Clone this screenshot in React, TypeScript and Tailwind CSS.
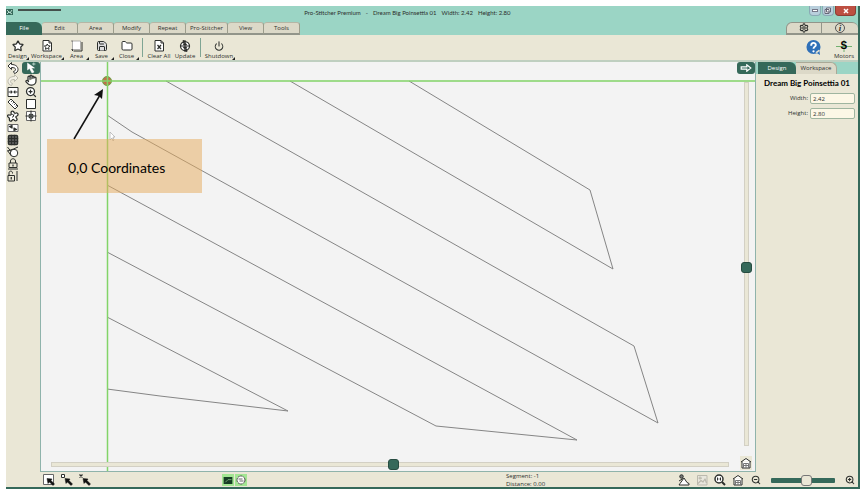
import type { ReactNode } from "react";
import {
  Folder,
  Grid3x3,
  Hand,
  Power,
  Save,
  Settings,
  Star,
  ZoomIn,
  ZoomOut,
} from "lucide-react";

const menuTabs = [
  { name: "File", width: "w-9" },
  { name: "Edit", width: "w-9" },
  { name: "Area", width: "w-9" },
  { name: "Modify", width: "w-9" },
  { name: "Repeat", width: "w-9" },
  { name: "Pro-Stitcher", width: "w-[42px]" },
  { name: "View", width: "w-9" },
  { name: "Tools", width: "w-9" },
];

const Svg = ({ children, size = "size-3" }: { children: ReactNode; size?: string }) => (
  <svg
    viewBox="0 0 24 24"
    className={`${size} shrink-0`}
    fill="none"
    stroke="currentColor"
    strokeWidth="2.5"
    strokeLinejoin="round"
    aria-hidden="true"
  >
    {children}
  </svg>
);

const WorkspaceIcon = () => (
  <Svg>
    <path d="M4 1h12l5 5v16H4z" fill="#fff" strokeWidth="2" />
    <path d="M16 1v5h5" strokeWidth="2" />
    <path d="m12.500 8 1.800 3.500 4 .5-3 2.700.8 4-3.600-2-3.600 2 .8-4-3-2.700 4-.5z" strokeWidth="2" />
  </Svg>
);

const AreaIcon = () => (
  <Svg>
    <path d="M3 2h16v17H3z" fill="#fff" stroke="#999" strokeWidth="1.5" />
    <path d="M5 22h17V4" strokeWidth="2" />
    <path d="M1 2h2M1 19h2v3" strokeWidth="2" />
  </Svg>
);

const ClearIcon = () => (
  <Svg>
    <path d="M4 1h12l5 5v16H4z" fill="#fff" strokeWidth="2" />
    <path d="M16 1v5h5" strokeWidth="2" />
    <path d="m9 10 7 8M16 10l-7 8" />
  </Svg>
);

const UpdateIcon = () => (
  <Svg>
    <circle cx="12" cy="12" r="9" fill="#fff" strokeWidth="2.5" />
    <path d="M12 0v24M4 12h16" strokeWidth="2" />
    <path d="m12 5 4 5H8zM12 19l4-5H8z" fill="currentColor" strokeWidth="1" />
    <path d="m8 0 5 3-5 4zM16 24l-5-3 5-4z" fill="currentColor" strokeWidth="1" />
  </Svg>
);

const UndoIcon = () => (
  <Svg>
    <path
      d="M2 8 9 1v4c8 0 13 4 13 10 0 4-3 7-7 8l-2-4c3-1 4-2 4-4 0-3-3-4-8-4v4z"
      fill="#fff"
      strokeWidth="2"
    />
  </Svg>
);

const RedoIcon = () => (
  <Svg>
    <path
      d="m22 8-7-7v4C7 5 2 9 2 15c0 4 3 7 7 8l2-4c-3-1-4-2-4-4 0-3 3-4 8-4v4z"
      fill="#f3f1e8"
      strokeWidth="2"
    />
  </Svg>
);

const FitIcon = () => (
  <Svg>
    <path d="M2 3h20v18H2z" fill="#fff" strokeWidth="2" />
    <path d="M3 12h7M14 12h7" strokeWidth="2" />
    <path d="m8 9 3 3-3 3zM16 9l-3 3 3 3z" fill="currentColor" strokeWidth="1" />
  </Svg>
);

const RulerIcon = () => (
  <Svg>
    <path d="m2 8 6-6 14 14-6 6z" fill="#fff" strokeWidth="2" />
    <path d="m11 5-3 3M14 8l-3 3M17 11l-3 3M20 14l-3 3" strokeWidth="1.5" />
  </Svg>
);

const PuzzleIcon = () => (
  <Svg>
    <path
      d="M8 5c0-4 6-4 6 0 1 2 2 2 4 1 5-1 5 5 2 6-3 1-3 2-1 4 3 4-1 7-4 5-2-3-4-3-5 0-3 3-6 0-5-3 0-2-1-3-3-4-2-3 0-5 3-4 3 1 4-1 3-5z"
      fill="#fff"
    />
    <path d="M9 9c3-1 5 1 4 4M14 9l-3 6" strokeWidth="2" />
  </Svg>
);

const SwapIcon = () => (
  <Svg>
    <path d="M2 5h20v14H2z" fill="#fff" stroke="#666" strokeWidth="2" />
    <path d="m5 9 5-2v5zM19 15l-5 2v-5z" fill="currentColor" />
  </Svg>
);

const LoopIcon = () => (
  <Svg>
    <circle cx="14" cy="14" r="7.500" fill="#fff" strokeWidth="2" />
    <path d="m1 2 7 9M1 9l7 10M1 10l12-4 9-4" strokeWidth="2" />
  </Svg>
);

const LockIcon = ({ open = false }: { open?: boolean }) => (
  <Svg>
    {open ? (
      <>
        <path d="M2 11h13v11H2zM4 11V6c0-5 7-5 7 0v1M20 2v20" strokeWidth="2" />
        <path d="M8.500 14v5" />
      </>
    ) : (
      <>
        <path d="M4 10h16v9H4zM7 10V6c0-6 10-6 10 0v4M2 22h20" strokeWidth="2" />
        <path d="M12 13v4" />
      </>
    )}
  </Svg>
);

const SquareIcon = () => (
  <Svg>
    <path d="M3 3h18v18H3z" fill="#fff" strokeWidth="2" />
  </Svg>
);

const TargetIcon = () => (
  <Svg>
    <path d="M3 3h18v18H3z" fill="#fff" stroke="#666" strokeWidth="2" />
    <path d="M12 1v6M12 17v6M1 12h6M17 12h6" strokeWidth="2" />
    <circle cx="12" cy="12" r="4" />
    <circle cx="12" cy="12" r="1" />
  </Svg>
);

const PointerIcon = () => (
  <Svg>
    <path d="M5 2v14l4-3 5 9 4-2-5-8h6z" fill="#fff" stroke="#fff" strokeWidth="1" />
    <path d="M14 4h7M17.500 1v6" stroke="#cfe8df" strokeWidth="1.500" />
  </Svg>
);

const HomeIcon = () => (
  <Svg>
    <path d="M2 10 12 3l10 7M4 9v13h16V9" fill="#fff" strokeWidth="2" />
    <path d="M7 22v-9h10v9M12 13v9M7 17h10" stroke="#777" strokeWidth="2" />
  </Svg>
);

const MagnifierIcon = () => (
  <Svg>
    <circle cx="10" cy="10" r="8" fill="#fff" strokeWidth="3" />
    <path d="m16 16 6 6" strokeWidth="4" />
    <path d="M7 7v6M10 8v1M10 11v1M13 7v6" strokeWidth="2" />
  </Svg>
);

const SceneIcon = () => (
  <Svg>
    <circle cx="7" cy="5" r="3.500" fill="#777" strokeWidth="2" />
    <path d="m2 14 8-5" strokeWidth="2" />
    <path d="m4 19 8-11 6 9 4 2v3H2z" fill="#fff" strokeWidth="2" />
  </Svg>
);

const PictureIcon = () => (
  <Svg>
    <path d="M3 3h19v19H3z" fill="#e8e6dd" strokeWidth="2" />
    <path d="m4 19 6-6 4 3 4-6 3 8M5 8h7M8 5v6" />
  </Svg>
);

const SelectIcon = ({ kind }: { kind: "box" | "point" | "cross" }) => (
  <Svg>
    {kind === "box" && <path d="M1 1h20v20H1z" fill="#fff" stroke="#666" strokeWidth="2" />}
    {kind === "point" && <path d="M1 1h6v6H1z" fill="#fff" strokeWidth="2" />}
    {kind === "cross" && <path d="m1 1 6 6M7 1 1 7" />}
    <path d="m8 9 10 1-2 3 7 7-3 3-7-7-3 3z" fill="#111" stroke="#111" strokeWidth="1" />
  </Svg>
);

const leftTools = [
  { name: "Undo", icon: <UndoIcon /> },
  { name: "Redo", icon: <RedoIcon />, disabled: true },
  { name: "Fit width", icon: <FitIcon /> },
  { name: "Measure", icon: <RulerIcon /> },
  { name: "Puzzle", icon: <PuzzleIcon /> },
  { name: "Swap", icon: <SwapIcon /> },
  { name: "Grid", icon: <Grid3x3 className="size-3" strokeWidth={3} fill="#777" /> },
  { name: "Loop", icon: <LoopIcon /> },
  { name: "Lock", icon: <LockIcon /> },
  { name: "Unlock height", icon: <LockIcon open /> },
];

const rightTools = [
  { name: "Pan", icon: <Hand className="size-3" strokeWidth={2.5} fill="#fff" /> },
  { name: "Zoom", icon: <ZoomIn className="size-3" strokeWidth={2.5} fill="#fff" /> },
  { name: "Box", icon: <SquareIcon /> },
  { name: "Center", icon: <TargetIcon /> },
];

const ToolButton = ({
  label,
  width,
  menu = false,
  children,
}: {
  label: string;
  width: string;
  menu?: boolean;
  children: ReactNode;
}) => (
  <button className={`relative flex h-full flex-col items-center pt-[5px] ${width}`}>
    {children}
    <span className="whitespace-nowrap leading-[8px]">{label}</span>
    {menu && (
      <span className="absolute bottom-0 right-0 size-[3px] bg-[#222] [clip-path:polygon(100%_0,100%_100%,0_100%)]" />
    )}
  </button>
);

const TitleBar = () => (
  <div className="flex h-4 items-start">
    <div className="flex w-[35%] items-center gap-1 pt-[2px]">
      <svg viewBox="0 0 8 8" className="size-2" aria-hidden="true">
        <path d="M0 1h7v6H0z" fill="#35695a" />
        <path d="m1 2 3 3 2-3M1 6l2-2 3 2" stroke="#b8ddd0" fill="none" />
      </svg>
      <div className="mb-1 h-[2px] w-[43px] bg-[#44504c]" />
    </div>
    <h1 className="flex gap-[5px] whitespace-pre pt-[3px] font-['Lato',sans-serif] leading-[8px]">
      <span>Pro-Stitcher Premium</span>
      <span>-</span>
      <span>Dream Big Poinsettia 01</span>
      <span>Width: 2.42</span>
      <span>Height: 2.80</span>
    </h1>
    <div className="ml-auto flex h-[10px] gap-px pr-[2px]">
      <button aria-label="Minimize" className="flex w-[12px] items-center justify-center rounded-b-sm border border-t-0 border-[#8aa9b5] bg-[#b9cfdc]">
        <span className="h-[3px] w-[6px] border border-[#778] bg-white" />
      </button>
      <button aria-label="Restore" className="flex w-[12px] items-center justify-center rounded-b-sm border border-t-0 border-[#8aa9b5] bg-[#b9cfdc]">
        <svg viewBox="0 0 8 8" className="size-2" fill="#fff" stroke="#667" aria-hidden="true">
          <path d="M2.500 1h4v4h-4zM1 2.500h4v4H1z" />
        </svg>
      </button>
      <button aria-label="Close window" className="flex w-[21px] items-center justify-center rounded-b-sm border border-t-0 border-[#8c3e35] bg-[#bd4f42]">
        <svg viewBox="0 0 6 6" className="size-[6px]" stroke="#fff" strokeWidth="1.5" aria-hidden="true">
          <path d="m1 1 4 4M5 1 1 5" />
        </svg>
      </button>
    </div>
  </div>
);

const MenuTabs = () => (
  <nav className="flex h-[13px] items-stretch">
    {menuTabs.map((tab, i) => (
      <button
        key={tab.name}
        className={`${tab.width} whitespace-nowrap leading-[11px] ${
          i === 0
            ? "rounded-tr-md bg-[#35695a] text-white"
            : "rounded-t-[3px] border-b-2 border-r border-t border-b-[#92958a] border-r-[#9c9d8c] border-t-[#b5b6a5] bg-[#dcd9c8] last:rounded-tr-md"
        }`}
      >
        {tab.name}
      </button>
    ))}
    <div className="ml-auto flex">
      <button aria-label="Settings" className="flex w-9 items-center justify-center rounded-tl-md border-x border-b-2 border-t border-[#92958a] bg-[#dcd9c8]">
        <Settings className="size-[10px]" strokeWidth={2.5} />
      </button>
      <button aria-label="Information" className="flex w-9 items-center justify-center rounded-tr-md border-b-2 border-t border-[#92958a] bg-[#dcd9c8]">
        <span className="flex size-[10px] items-center justify-center rounded-full border border-[#555] font-['Liberation_Serif',serif] text-[9px] font-bold italic leading-none">
          i
        </span>
      </button>
    </div>
  </nav>
);

const Toolbar = () => (
  <div className="flex h-[27px] items-stretch border-b-2 border-[#bfcfc0] bg-[#eae7d6]">
    <ToolButton label="Design" width="w-[23px]" menu>
      <Star className="size-3" strokeWidth={2.5} fill="#fff" />
    </ToolButton>
    <ToolButton label="Workspace" width="w-[35px]" menu>
      <WorkspaceIcon />
    </ToolButton>
    <ToolButton label="Area" width="w-[25px]" menu>
      <AreaIcon />
    </ToolButton>
    <ToolButton label="Save" width="w-[25px]" menu>
      <Save className="size-3" strokeWidth={2} fill="#ddd" />
    </ToolButton>
    <ToolButton label="Close" width="w-[25px]" menu>
      <Folder className="size-3" strokeWidth={2} fill="#fff" />
    </ToolButton>
    <div className="mx-[3px] my-[3px] w-px bg-[#7fa594]" />
    <ToolButton label="Clear All" width="w-[26px]">
      <ClearIcon />
    </ToolButton>
    <ToolButton label="Update" width="w-[26px]">
      <UpdateIcon />
    </ToolButton>
    <div className="mx-[2px] my-[3px] w-px bg-[#7fa594]" />
    <ToolButton label="Shutdown" width="w-8" menu>
      <span className="flex h-3 items-center">
        <Power className="size-[10px]" strokeWidth={2.5} />
      </span>
    </ToolButton>
    <div className="ml-auto flex gap-[13px] pr-[4px]">
      <button aria-label="Help" className="flex items-center">
        <svg viewBox="0 0 16 16" className="size-[15px]" aria-hidden="true">
          <path d="M8 0a7.500 7.500 0 1 1 0 15A7.500 7.500 0 0 1 8 0M10 13l5 3-1-6z" fill="#2f70b8" />
          <path d="M5.500 6c0-4 5-3.500 5-.700C10.500 7 8 7.200 8 9.300" fill="none" stroke="#fff" strokeWidth="2" />
          <circle cx="8" cy="12" r="1.200" fill="#fff" />
        </svg>
      </button>
      <button className="flex flex-col items-center pt-[5px]">
        <span className="relative flex h-3 w-4 items-center justify-center">
          <svg viewBox="0 0 16 12" className="absolute inset-0 size-full" stroke="#72b070" aria-hidden="true">
            <path d="M0 6.500h16M8 0v12" />
          </svg>
          <span className="relative font-['Liberation_Sans',sans-serif] text-[10px] font-bold leading-none text-black">
            S
          </span>
        </span>
        <span className="leading-[8px]">Motors</span>
      </button>
    </div>
  </div>
);

const ToolPalette = () => (
  <aside className="flex w-[34px] shrink-0 gap-[2px] bg-[#eae7d6]">
    <div className="flex w-[14px] flex-col">
      {leftTools.map((tool) => (
        <button
          key={tool.name}
          aria-label={tool.name}
          disabled={tool.disabled}
          className="flex h-3 items-center justify-center disabled:text-[#bbb9ad]"
        >
          {tool.icon}
        </button>
      ))}
    </div>
    <div className="flex flex-1 flex-col">
      <button aria-label="Select" className="flex h-3 items-center justify-center rounded-[3px] bg-[#35695a]">
        <PointerIcon />
      </button>
      {rightTools.map((tool) => (
        <button key={tool.name} aria-label={tool.name} className="flex h-3 items-center justify-center">
          {tool.icon}
        </button>
      ))}
    </div>
  </aside>
);

const Drawing = () => (
  <svg className="absolute inset-0 size-full" fill="none" aria-label="Dream Big Poinsettia 01">
    <g stroke="#858585" strokeWidth="1">
      <path d="M368 19 549 128 572 207 249 19" />
      <path d="M125 19 593 284 617 361 91 70 66 53" />
      <path d="M66 123 536 378 395 364 66 190" />
      <path d="M66 255 247 349 119 334 66 327" />
    </g>
    <circle cx="66" cy="19" r="4.500" fill="#b77b4d" stroke="#6aa646" />
    <path d="m63 16 6 6M69 16l-6 6" stroke="#d4574a" strokeDasharray="2 1" />
    <path d="M66.500 0v1200M0 19h2400" stroke="#82d468" strokeWidth="1.500" />
    <path d="m69 70 0 8 2-2 1 3 1-1-1-3h2z" fill="#fff" stroke="#aaa" strokeWidth=".700" />
    <path d="M33 77 59 33" stroke="#111" strokeWidth="1.500" />
    <path d="m62 27-1 10-3-3-5-1z" fill="#111" />
  </svg>
);

const Canvas = () => (
  <main className="relative flex min-w-0 flex-1 border-x border-b border-[#8fb3ab] bg-[#f3f3f3]">
    <Drawing />
    <div className="absolute left-[6px] top-[77px] flex h-[54px] w-[155px] items-center bg-[#e6aa5a]/50 pl-[21px] pt-[3px] font-['Lato',sans-serif] text-sm text-black">
      0,0 Coordinates
    </div>
    <div className="relative flex flex-1 flex-col justify-end pb-px pl-[10px] pr-[8px]">
      <input
        type="range"
        aria-label="Horizontal scroll"
        min={0}
        max={100}
        defaultValue={50.5}
        step={0.5}
        className="h-[11px] w-full appearance-none bg-transparent [&::-webkit-slider-runnable-track]:h-[5px] [&::-webkit-slider-runnable-track]:border [&::-webkit-slider-runnable-track]:border-[#d3d0c4] [&::-webkit-slider-runnable-track]:bg-[#eae7d6] [&::-webkit-slider-thumb]:-mt-1 [&::-webkit-slider-thumb]:size-[11px] [&::-webkit-slider-thumb]:appearance-none [&::-webkit-slider-thumb]:rounded-[3px] [&::-webkit-slider-thumb]:border [&::-webkit-slider-thumb]:border-[#274c41] [&::-webkit-slider-thumb]:bg-[#35695a]"
      />
    </div>
    <div className="relative flex w-[18px] shrink-0 flex-col items-center">
      <button aria-label="Collapse panel" className="flex h-3 w-full items-center justify-center rounded-[3px] bg-[#35695a]">
        <svg viewBox="0 0 14 10" className="h-2 w-3" fill="none" stroke="#fff" strokeWidth="1.500" aria-hidden="true">
          <path d="M1 3.500h7V1l5 4-5 4V6.500H1z" />
        </svg>
      </button>
      <input
        type="range"
        aria-label="Vertical scroll"
        min={0}
        max={100}
        defaultValue={51}
        className="mb-[10px] mt-2 min-h-0 w-[11px] flex-1 appearance-none bg-transparent [writing-mode:vertical-lr] [&::-webkit-slider-runnable-track]:w-[5px] [&::-webkit-slider-runnable-track]:border [&::-webkit-slider-runnable-track]:border-[#d3d0c4] [&::-webkit-slider-runnable-track]:bg-[#eae7d6] [&::-webkit-slider-thumb]:-ml-1 [&::-webkit-slider-thumb]:size-[11px] [&::-webkit-slider-thumb]:appearance-none [&::-webkit-slider-thumb]:rounded-[3px] [&::-webkit-slider-thumb]:border [&::-webkit-slider-thumb]:border-[#274c41] [&::-webkit-slider-thumb]:bg-[#35695a]"
      />
      <button aria-label="Home view" className="mb-px flex h-[14px] w-3 items-center justify-center bg-[#eae7d6]">
        <HomeIcon />
      </button>
    </div>
  </main>
);

const PropertyPanel = () => (
  <aside className="flex w-[102px] shrink-0 flex-col bg-[#eae7d6]">
    <div className="flex h-3 bg-[#9bd5c5] pl-[2px]">
      <button className="w-[38px] rounded-tr-md bg-[#35695a] leading-3 text-white">Design</button>
      <button className="w-[41px] rounded-tr-md border-r border-t border-[#aaa997] bg-[#dcd9c8] leading-[11px]">
        Workspace
      </button>
    </div>
    <h2 className="whitespace-nowrap pt-1 text-center font-['Lato',sans-serif] text-[8px] font-bold leading-[10px] text-black">
      Dream Big Poinsettia 01
    </h2>
    <div className="flex flex-col items-end gap-1 pr-[3px] pt-[5px]">
      <label className="flex items-center gap-[2px]">
        Width:
        <input defaultValue="2.42" className="h-[11px] w-[45px] rounded-[2px] border border-[#9fb5a0] bg-[#fcf7e6] px-[2px]" />
      </label>
      <label className="flex items-center gap-[2px]">
        Height:
        <input defaultValue="2.80" className="h-[11px] w-[45px] rounded-[2px] border border-[#9fb5a0] bg-[#fcf7e6] px-[2px]" />
      </label>
    </div>
  </aside>
);

const StatusBar = () => (
  <footer className="grid h-[15px] grid-cols-[216px_1fr_352px] items-center bg-[#eae7d6]">
    <div className="flex gap-[6px] pl-[37px]">
      <button aria-label="Select box"><SelectIcon kind="box" /></button>
      <button aria-label="Select point"><SelectIcon kind="point" /></button>
      <button aria-label="Deselect"><SelectIcon kind="cross" /></button>
    </div>
    <div className="flex gap-px">
      <span className="flex h-3 w-3 items-center justify-center bg-[#a2e592]">
        <svg viewBox="0 0 10 8" className="h-[7px] w-[10px]" aria-hidden="true">
          <path d="M0 0h10v8H0z" fill="#173d25" />
          <path d="M2 6 5 3h4" stroke="#7cae7b" fill="none" />
        </svg>
      </span>
      <span className="flex h-3 w-3 items-center justify-center bg-[#a2e592]">
        <svg viewBox="0 0 10 10" className="size-[10px]" fill="#fff" stroke="#444" aria-hidden="true">
          <circle cx="5" cy="5" r="4" strokeDasharray="2 .500" />
          <path d="M2.500 4h4M3.500 6h4" stroke="#666" />
        </svg>
      </span>
    </div>
    <div className="flex items-center">
      <div className="leading-[8px]">
        <p>Segment: -1</p>
        <p>Distance: 0.00</p>
      </div>
      <div className="ml-auto flex items-center gap-[6px] pr-[2px]">
        <button aria-label="Scene"><SceneIcon /></button>
        <button aria-label="Picture" disabled className="text-[#bbb9ad]"><PictureIcon /></button>
        <button aria-label="Zoom to fit"><MagnifierIcon /></button>
        <button aria-label="Home"><HomeIcon /></button>
        <button aria-label="Zoom out" className="flex size-3 items-center justify-center">
          <ZoomOut className="size-[10px]" strokeWidth={2.5} />
        </button>
        <input
          type="range"
          aria-label="Zoom level"
          min={0}
          max={100}
          defaultValue={56}
          className="mx-[3px] h-[11px] w-[64px] appearance-none bg-transparent [&::-webkit-slider-runnable-track]:h-[5px] [&::-webkit-slider-runnable-track]:rounded-[1px] [&::-webkit-slider-runnable-track]:bg-[#35695a] [&::-webkit-slider-thumb]:-mt-[3px] [&::-webkit-slider-thumb]:size-[11px] [&::-webkit-slider-thumb]:appearance-none [&::-webkit-slider-thumb]:rounded-[3px] [&::-webkit-slider-thumb]:border [&::-webkit-slider-thumb]:border-[#777] [&::-webkit-slider-thumb]:bg-[#eae7d6]"
        />
        <button aria-label="Zoom in" className="flex size-3 items-center justify-center">
          <ZoomIn className="size-[10px]" strokeWidth={2.5} />
        </button>
      </div>
    </div>
  </footer>
);

const App = () => {
  return (
    <div className="flex h-screen bg-white pb-1 pl-[6px] pr-[7px] pt-[6px] font-['Open_Sans','Noto_Sans',sans-serif] text-[6px] text-[#2c2f2c]">
      <div className="flex min-w-0 flex-1 flex-col border-b-2 border-r-2 border-[#35695a] bg-[#9bd5c5]">
        <TitleBar />
        <MenuTabs />
        <Toolbar />
        <div className="flex min-h-0 flex-1">
          <ToolPalette />
          <Canvas />
          <PropertyPanel />
        </div>
        <StatusBar />
      </div>
    </div>
  );
};

export default App;
